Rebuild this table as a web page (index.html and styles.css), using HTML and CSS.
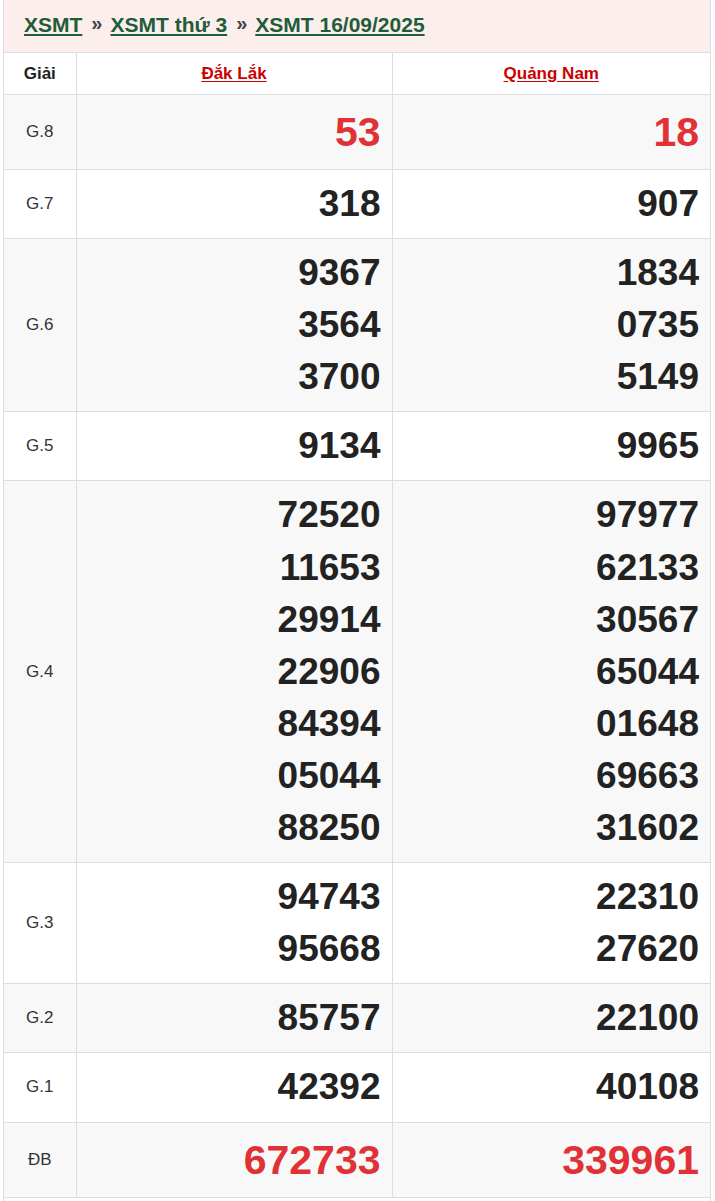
FILE: index.html
```html
<!DOCTYPE html>
<html lang="vi">
<head>
<meta charset="utf-8">
<title>XSMT 16/09/2025</title>
<link rel="stylesheet" href="styles.css">
</head>
<body>
<div class="box">
  <div class="crumbs">
    <a href="#">XSMT</a><span class="sep">»</span><a href="#">XSMT thứ 3</a><span class="sep">»</span><a href="#">XSMT 16/09/2025</a>
  </div>
  <table class="kq">
    <colgroup><col class="c1"><col class="c2"><col class="c3"></colgroup>
    <thead>
      <tr><th class="lbl">Giải</th><th><a href="#">Đắk Lắk</a></th><th><a href="#">Quảng Nam</a></th></tr>
    </thead>
    <tbody>
      <tr class="alt"><td class="lbl">G.8</td><td class="num red">53</td><td class="num red">18</td></tr>
      <tr><td class="lbl">G.7</td><td class="num">318</td><td class="num">907</td></tr>
      <tr class="alt"><td class="lbl">G.6</td><td class="num">9367<br>3564<br>3700</td><td class="num">1834<br>0735<br>5149</td></tr>
      <tr><td class="lbl">G.5</td><td class="num">9134</td><td class="num">9965</td></tr>
      <tr class="alt"><td class="lbl">G.4</td><td class="num">72520<br>11653<br>29914<br>22906<br>84394<br>05044<br>88250</td><td class="num">97977<br>62133<br>30567<br>65044<br>01648<br>69663<br>31602</td></tr>
      <tr><td class="lbl">G.3</td><td class="num">94743<br>95668</td><td class="num">22310<br>27620</td></tr>
      <tr class="alt"><td class="lbl">G.2</td><td class="num">85757</td><td class="num">22100</td></tr>
      <tr><td class="lbl">G.1</td><td class="num">42392</td><td class="num">40108</td></tr>
      <tr class="alt"><td class="lbl">ĐB</td><td class="num red big">672733</td><td class="num red big">339961</td></tr>
    </tbody>
  </table>
  <div class="rest"></div>
</div>
</body>
</html>
```

FILE: styles.css
```css
html, body {
  margin: 0;
  padding: 0;
  background: #fff;
}
body {
  font-family: "Liberation Sans", Arial, sans-serif;
  color: #222;
}
.box {
  margin: 0 4px 0 3px;
  border-left: 1px solid #ddd;
  border-right: 1px solid #ddd;
}
.crumbs {
  background: #fdeeee;
  padding: 13px 0 15px 20px;
  font-size: 21px;
  line-height: 24px;
  font-weight: bold;
  border-bottom: 1px solid #ddd;
  white-space: nowrap;
}
.crumbs a {
  color: #1f5c38;
  text-decoration: underline;
  text-underline-offset: 2px;
}
.crumbs .sep {
  color: #444;
  margin: 0 8px 0 9px;
  position: relative;
  top: -2px;
  font-size: 20px;
}
.kq {
  width: 100%;
  border-collapse: collapse;
  table-layout: fixed;
}
.kq .c1 { width: 72px; }
.kq .c2 { width: 316px; }
.kq td, .kq th {
  border-right: 1px solid #ddd;
  border-bottom: 1px solid #ddd;
  padding: 0;
}
.kq td:last-child, .kq th:last-child {
  border-right: none;
}
.kq th {
  height: 41px;
  font-size: 17px;
  font-weight: bold;
  text-align: center;
  vertical-align: middle;
}
.kq th a {
  color: #cc0000;
  text-decoration: underline;
  text-underline-offset: 2px;
}
.kq th.lbl {
  color: #222;
}
.kq tr.alt td {
  background: #f8f8f8;
}
.kq td.lbl {
  text-align: center;
  vertical-align: middle;
  font-size: 17px;
  color: #333;
}
.kq td.num {
  text-align: right;
  padding: 8px 11px 8px 0;
  font-size: 37px;
  line-height: 52.1px;
  font-weight: bold;
  color: #222;
}
.kq td.num.red {
  color: #e03236;
  font-size: 41px;
  line-height: 58px;
}
.rest {
  height: 6px;
}
```
